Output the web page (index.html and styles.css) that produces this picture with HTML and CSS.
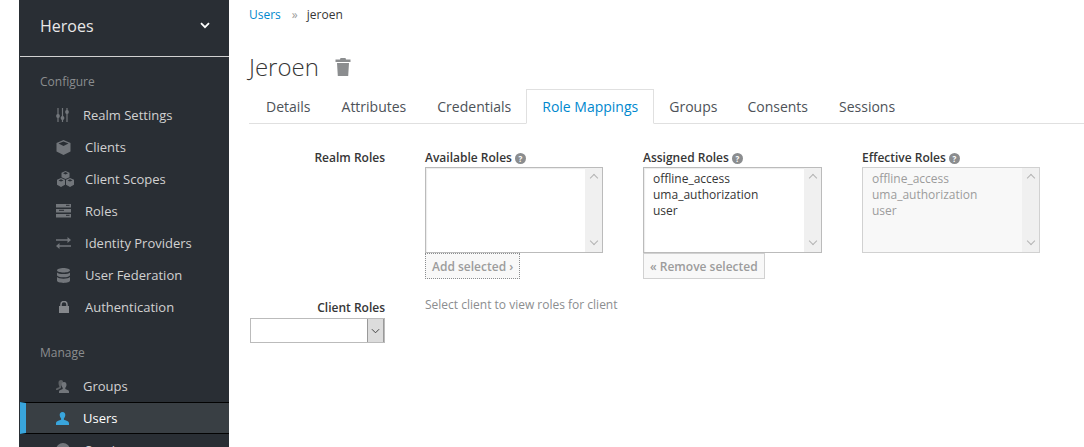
FILE: index.html
```html
<!DOCTYPE html>
<html lang="en">
<head>
  <meta charset="UTF-8" />
  <title>Jeroen - Role Mappings</title>
  <link rel="stylesheet" href="styles.css">
</head>
<body>
  <div class="gutter"></div>

  <div class="sidebar">
    <div class="realm">
      <span>Heroes</span>
      <svg class="realm-caret" viewBox="0 0 10 7"><path d="M1 1.200l4 4 4-4" fill="none" stroke="#fff" stroke-width="1.800"/></svg>
    </div>

    <div class="nav-title">Configure</div>
    <ul class="nav">
      <li class="nav-item tight">
        <span class="icon-box"><svg width="13" height="14" viewBox="0 0 13 14"><path d="M2 0v14M6.500 0v14M11 0v14" stroke="#72767b" stroke-width="1.200"/><circle cx="2" cy="8" r="1.900" fill="#72767b"/><circle cx="6.500" cy="10" r="1.900" fill="#72767b"/><circle cx="11" cy="4" r="1.900" fill="#72767b"/></svg></span>
        Realm Settings
      </li>
      <li class="nav-item">
        <span class="icon-box"><svg width="15" height="15" viewBox="0 0 15 15"><path d="M7.500 0L14.500 3v8.500L7.500 15 .5 11.500V3z" fill="#72767b"/><path d="M7.500 1.500L12.500 3.600 7.500 6 2.500 3.600z" fill="#292e34"/></svg></span>
        Clients
      </li>
      <li class="nav-item">
        <span class="icon-box"><svg width="19" height="16" viewBox="0 0 19 16"><path d="M9.500 0L13.500 1.700V6.300L9.500 8 5.500 6.300V1.700zM5 7L9 8.700V13.800L5 16 1 13.800V8.700zM14 7L18 8.700V13.800L14 16 10 13.800V8.700z" fill="#72767b"/><path d="M9.500 1L12 2.200 9.500 3.400 7 2.200zM5 8.200L7.500 9.400 5 10.600 2.500 9.400zM14 8.200L16.500 9.400 14 10.600 11.500 9.400z" fill="#292e34"/></svg></span>
        Client Scopes
      </li>
      <li class="nav-item">
        <span class="icon-box"><svg width="15" height="14" viewBox="0 0 15 14"><path d="M0 0h15v3.500H0zM0 5h15v3.500H0zM0 10h15v3.500H0z" fill="#72767b"/><path d="M10 1.300h3.500M3 6.300h5M10 11.300h3.500" stroke="#292e34"/></svg></span>
        Roles
      </li>
      <li class="nav-item">
        <span class="icon-box"><svg width="15" height="12" viewBox="0 0 15 12"><path d="M0 3h12M15 9H3" stroke="#72767b" stroke-width="1.700"/><path d="M11.500 0l3.500 3-3.500 3zM3.500 6L0 9l3.500 3z" fill="#72767b"/></svg></span>
        Identity Providers
      </li>
      <li class="nav-item">
        <span class="icon-box db"><svg width="13" height="15" viewBox="0 0 13 15"><path d="M0 2.300C0 1 3 0 6.500 0S13 1 13 2.300 10 4.600 6.500 4.600 0 3.600 0 2.300zM0 4.500C1 5.600 3.500 6 6.500 6s5.500-.4 6.500-1.500v2.400C13 8.300 10 9.300 6.500 9.300S0 8.300 0 6.900zM0 9.100C1 10.200 3.500 10.700 6.500 10.700s5.500-.5 6.500-1.600v3.500C13 14 10 15 6.500 15S0 14 0 12.600z" fill="#72767b"/></svg></span>
        User Federation
      </li>
      <li class="nav-item">
        <span class="icon-box lock"><svg width="10" height="12" viewBox="0 0 10 12"><path d="M2 5V3.500a3 3 0 016 0V5" fill="none" stroke="#85888c" stroke-width="1.500"/><path d="M0 5h10v7H0z" fill="#85888c"/></svg></span>
        Authentication
      </li>
    </ul>

    <div class="nav-title manage">Manage</div>
    <ul class="nav">
      <li class="nav-item tight">
        <span class="icon-box"><svg width="13" height="13" viewBox="0 0 13 13"><path d="M5 0C6.500 0 7 .9 7 2.200L5 6.500V8L1.500 10H0V8.700C.5 8 2.500 7.600 3.300 7V6C2.800 5.400 2.500 4 2.500 2.700 2.500 1 3.500 0 5 0z" fill="#5d6165"/><path d="M8 2c1.800 0 2.500 1.200 2.500 2.700 0 1.300-.6 2.500-1.200 3.100v1.100c1.300.6 3.700 1 3.700 2.500V13H3v-1.600c0-1.500 2.400-1.900 3.700-2.500V7.800C6.100 7.200 5.500 6 5.500 4.700 5.500 3.200 6.200 2 8 2z" fill="#72767b"/></svg></span>
        Groups
      </li>
      <li class="nav-item tight active">
        <span class="icon-box"><svg width="13" height="13" viewBox="0 0 13 13"><path d="M6.500 0c2 0 2.800 1.400 2.800 3 0 1.500-.8 2.800-1.400 3.500v1.300c1.500.7 5.100 1.200 5.100 3.400V13H0v-1.800c0-2.200 3.600-2.700 5.100-3.400V6.500C4.500 5.800 3.700 4.500 3.700 3c0-1.600.8-3 2.800-3z" fill="#39a5dc"/></svg></span>
        Users
      </li>
      <li class="nav-item">
        <span class="icon-box"><svg width="14" height="14" viewBox="0 0 14 14"><circle cx="7" cy="7" r="7" fill="#72767b"/></svg></span>
        Sessions
      </li>
    </ul>
  </div>

  <div class="main">
    <div class="breadcrumb">
      <a class="link">Users</a>
      <span class="crumb-sep">»</span>
      <span>jeroen</span>
    </div>

    <div class="page-title">
      <h1>Jeroen</h1>
      <svg class="trash" viewBox="0 0 16 18"><path d="M5.500 0h5l.5 1.500h4.500V4H.5V1.500H5z" fill="#8b8d8f"/><path d="M2 5h12l-.8 13H2.800z" fill="#8b8d8f"/></svg>
    </div>

    <ul class="tabs">
      <li>Details</li>
      <li>Attributes</li>
      <li>Credentials</li>
      <li class="active">Role Mappings</li>
      <li>Groups</li>
      <li>Consents</li>
      <li>Sessions</li>
    </ul>

    <div class="form-row realm-row">
      <div class="row-label">Realm Roles</div>
      <div class="role-col">
        <div class="col-label">Available Roles <span class="help">?</span></div>
        <div class="role-list">
          <div class="role-items"></div>
          <div class="scroll"><span class="arrow up"></span><span class="arrow down"></span></div>
        </div>
        <button class="move-btn focused">Add selected ›</button>
      </div>
      <div class="role-col mid">
        <div class="col-label">Assigned Roles <span class="help">?</span></div>
        <div class="role-list">
          <div class="role-items">
            <div>offline_access</div>
            <div>uma_authorization</div>
            <div>user</div>
          </div>
          <div class="scroll"><span class="arrow up"></span><span class="arrow down"></span></div>
        </div>
        <button class="move-btn">« Remove selected</button>
      </div>
      <div class="role-col">
        <div class="col-label">Effective Roles <span class="help">?</span></div>
        <div class="role-list disabled">
          <div class="role-items">
            <div>offline_access</div>
            <div>uma_authorization</div>
            <div>user</div>
          </div>
          <div class="scroll"><span class="arrow up"></span><span class="arrow down"></span></div>
        </div>
      </div>
    </div>

    <div class="form-row client-row">
      <div class="row-label">
        Client Roles
        <div class="client-select">
          <span class="select-btn"><svg viewBox="0 0 10 6"><path d="M1 1l4 4 4-4" fill="none" stroke="#444" stroke-width="1.100"/></svg></span>
        </div>
      </div>
      <div class="client-hint">Select client to view roles for client</div>
    </div>
  </div>
</body>
</html>
```

FILE: styles.css
```css
* { box-sizing: border-box; }
html, body {
  height: 100%;
}
body {
  margin: 0;
  display: flex;
  overflow: hidden;
  background: #fff;
  color: #363636;
  font-family: "Open Sans", sans-serif;
  font-size: 12px;
  line-height: 16px;
}

.gutter {
  width: 19px;
  flex: none;
}

/* sidebar */
.sidebar {
  width: 210px;
  height: 447px;
  flex: none;
  overflow: hidden;
  background: #292e34;
  color: #d1d1d1;
  font-size: 13px;
}
.realm {
  height: 57px;
  padding: 0 19px 5px 20px;
  display: flex;
  align-items: center;
  justify-content: space-between;
  border-bottom: 1px solid #d1d1d1;
  margin-left: 1px;
  color: #e8e8e8;
  font-size: 16px;
}
.realm-caret {
  width: 10px;
  height: 7px;
}
.nav-title {
  margin: 16px 0 0 21px;
  height: 18px;
  line-height: 18px;
  color: #8b8d8f;
  font-size: 12px;
}
.nav-title.manage {
  margin-top: 21px;
  margin-bottom: 8px;
}
.nav {
  list-style: none;
  margin: 8px 0 0;
  padding: 0;
}
.nav-title.manage + .nav {
  margin-top: 0;
}
.nav-item {
  height: 32px;
  display: flex;
  align-items: center;
  padding-left: 37px;
}
.icon-box {
  width: 29px;
  flex: none;
  display: flex;
  align-items: center;
}
.nav-item.tight .icon-box {
  width: 27px;
}
.icon-box.db {
  padding-left: 1px;
}
.icon-box.lock {
  padding-left: 3px;
}
.nav-item.active {
  margin-left: 1px;
  background: #393f44;
  border-top: 1px solid #030303;
  border-bottom: 1px solid #030303;
  border-left: 6px solid #39a5dc;
  padding-left: 30px;
  color: #fff;
}

/* main area */
.main {
  flex: 1;
  min-width: 0;
  padding: 0 0 0 20px;
}
.breadcrumb {
  padding-top: 7px;
  height: 44px;
  display: flex;
  gap: 11px;
  color: #363636;
}
.link {
  color: #0088ce;
}
.crumb-sep {
  margin-right: -2px;
  color: #9c9c9c;
}
.page-title {
  display: flex;
  align-items: center;
  gap: 16px;
  height: 45px;
  padding-top: 1px;
}
.page-title h1 {
  margin: 0;
  font-size: 24px;
  font-weight: 300;
  line-height: 32px;
}
.trash {
  width: 16px;
  height: 18px;
}

.tabs {
  list-style: none;
  display: flex;
  margin: 0;
  padding: 0 0 0 1px;
  height: 35px;
  font-size: 14px;
  border-bottom: 1px solid #e0e0e0;
}
.tabs li {
  height: 35px;
  padding: 9px 15px 0 16px;
  color: #4d5258;
  line-height: 18px;
}
.tabs li.active {
  color: #0088ce;
  background: #fff;
  border: 1px solid #e0e0e0;
  border-bottom-color: #fff;
  padding: 8px 15px 0;
}
.tabs li.active + li {
  padding: 9px 14px 0 15px;
}

.form-row {
  display: flex;
}
.realm-row {
  padding-top: 26px;
}
.row-label {
  width: 135px;
  margin-left: 1px;
  text-align: right;
  font-weight: 600;
  flex: none;
}
.role-col {
  width: 178px;
  margin-left: 40px;
  flex: none;
}
.role-col.mid {
  width: 179px;
}
.col-label {
  font-weight: 600;
  height: 17px;
  white-space: nowrap;
}
.help {
  display: inline-block;
  width: 11px;
  height: 11px;
  border-radius: 50%;
  background: #8b8d8f;
  color: #fff;
  font-size: 8px;
  font-weight: 700;
  line-height: 11px;
  text-align: center;
}
.role-list {
  display: flex;
  height: 86px;
  border: 1px solid #bbb;
  background: #fff;
  box-shadow: inset 1px 1px 1px rgba(0,0,0,0.08);
}
.role-items {
  flex: 1;
  padding: 3px 9px;
}
.scroll {
  width: 17px;
  display: flex;
  flex-direction: column;
  justify-content: space-between;
  align-items: center;
  padding: 7px 0 8px;
  background: #f0f0f0;
}
.arrow {
  width: 6px;
  height: 6px;
  border-left: 1px solid #b4b4b4;
  border-top: 1px solid #b4b4b4;
  transform: rotate(45deg);
}
.arrow.down {
  transform: rotate(225deg);
}
.role-list.disabled {
  background: #f8f8f8;
  border-color: #d1d1d1;
  box-shadow: none;
  color: #9c9c9c;
}
.move-btn {
  display: block;
  height: 26px;
  padding: 1px 6px 0;
  margin: 0;
  border: 1px solid #d1d1d1;
  background: #f8f8f8;
  color: #9c9c9c;
  font-family: inherit;
  font-size: 12px;
  font-weight: 600;
  line-height: 24px;
}
.move-btn.focused {
  border: 1px dotted #8b8d8f;
}

.client-row {
  padding-top: 22px;
  margin-top: -1px;
}
.client-select {
  height: 25px;
  margin-top: 2px;
  display: flex;
  justify-content: flex-end;
  border: 1px solid #bbb;
  background: #fff;
}
.select-btn {
  width: 17px;
  height: 23px;
  background: #dcdcdc;
  border-left: 1px solid #999;
  border-right: 1px solid #999;
  display: flex;
  align-items: center;
  justify-content: center;
}
.select-btn svg {
  width: 9px;
  height: 6px;
}
.client-hint {
  margin-left: 40px;
  margin-top: -3px;
  color: #8b8d8f;
}
```
